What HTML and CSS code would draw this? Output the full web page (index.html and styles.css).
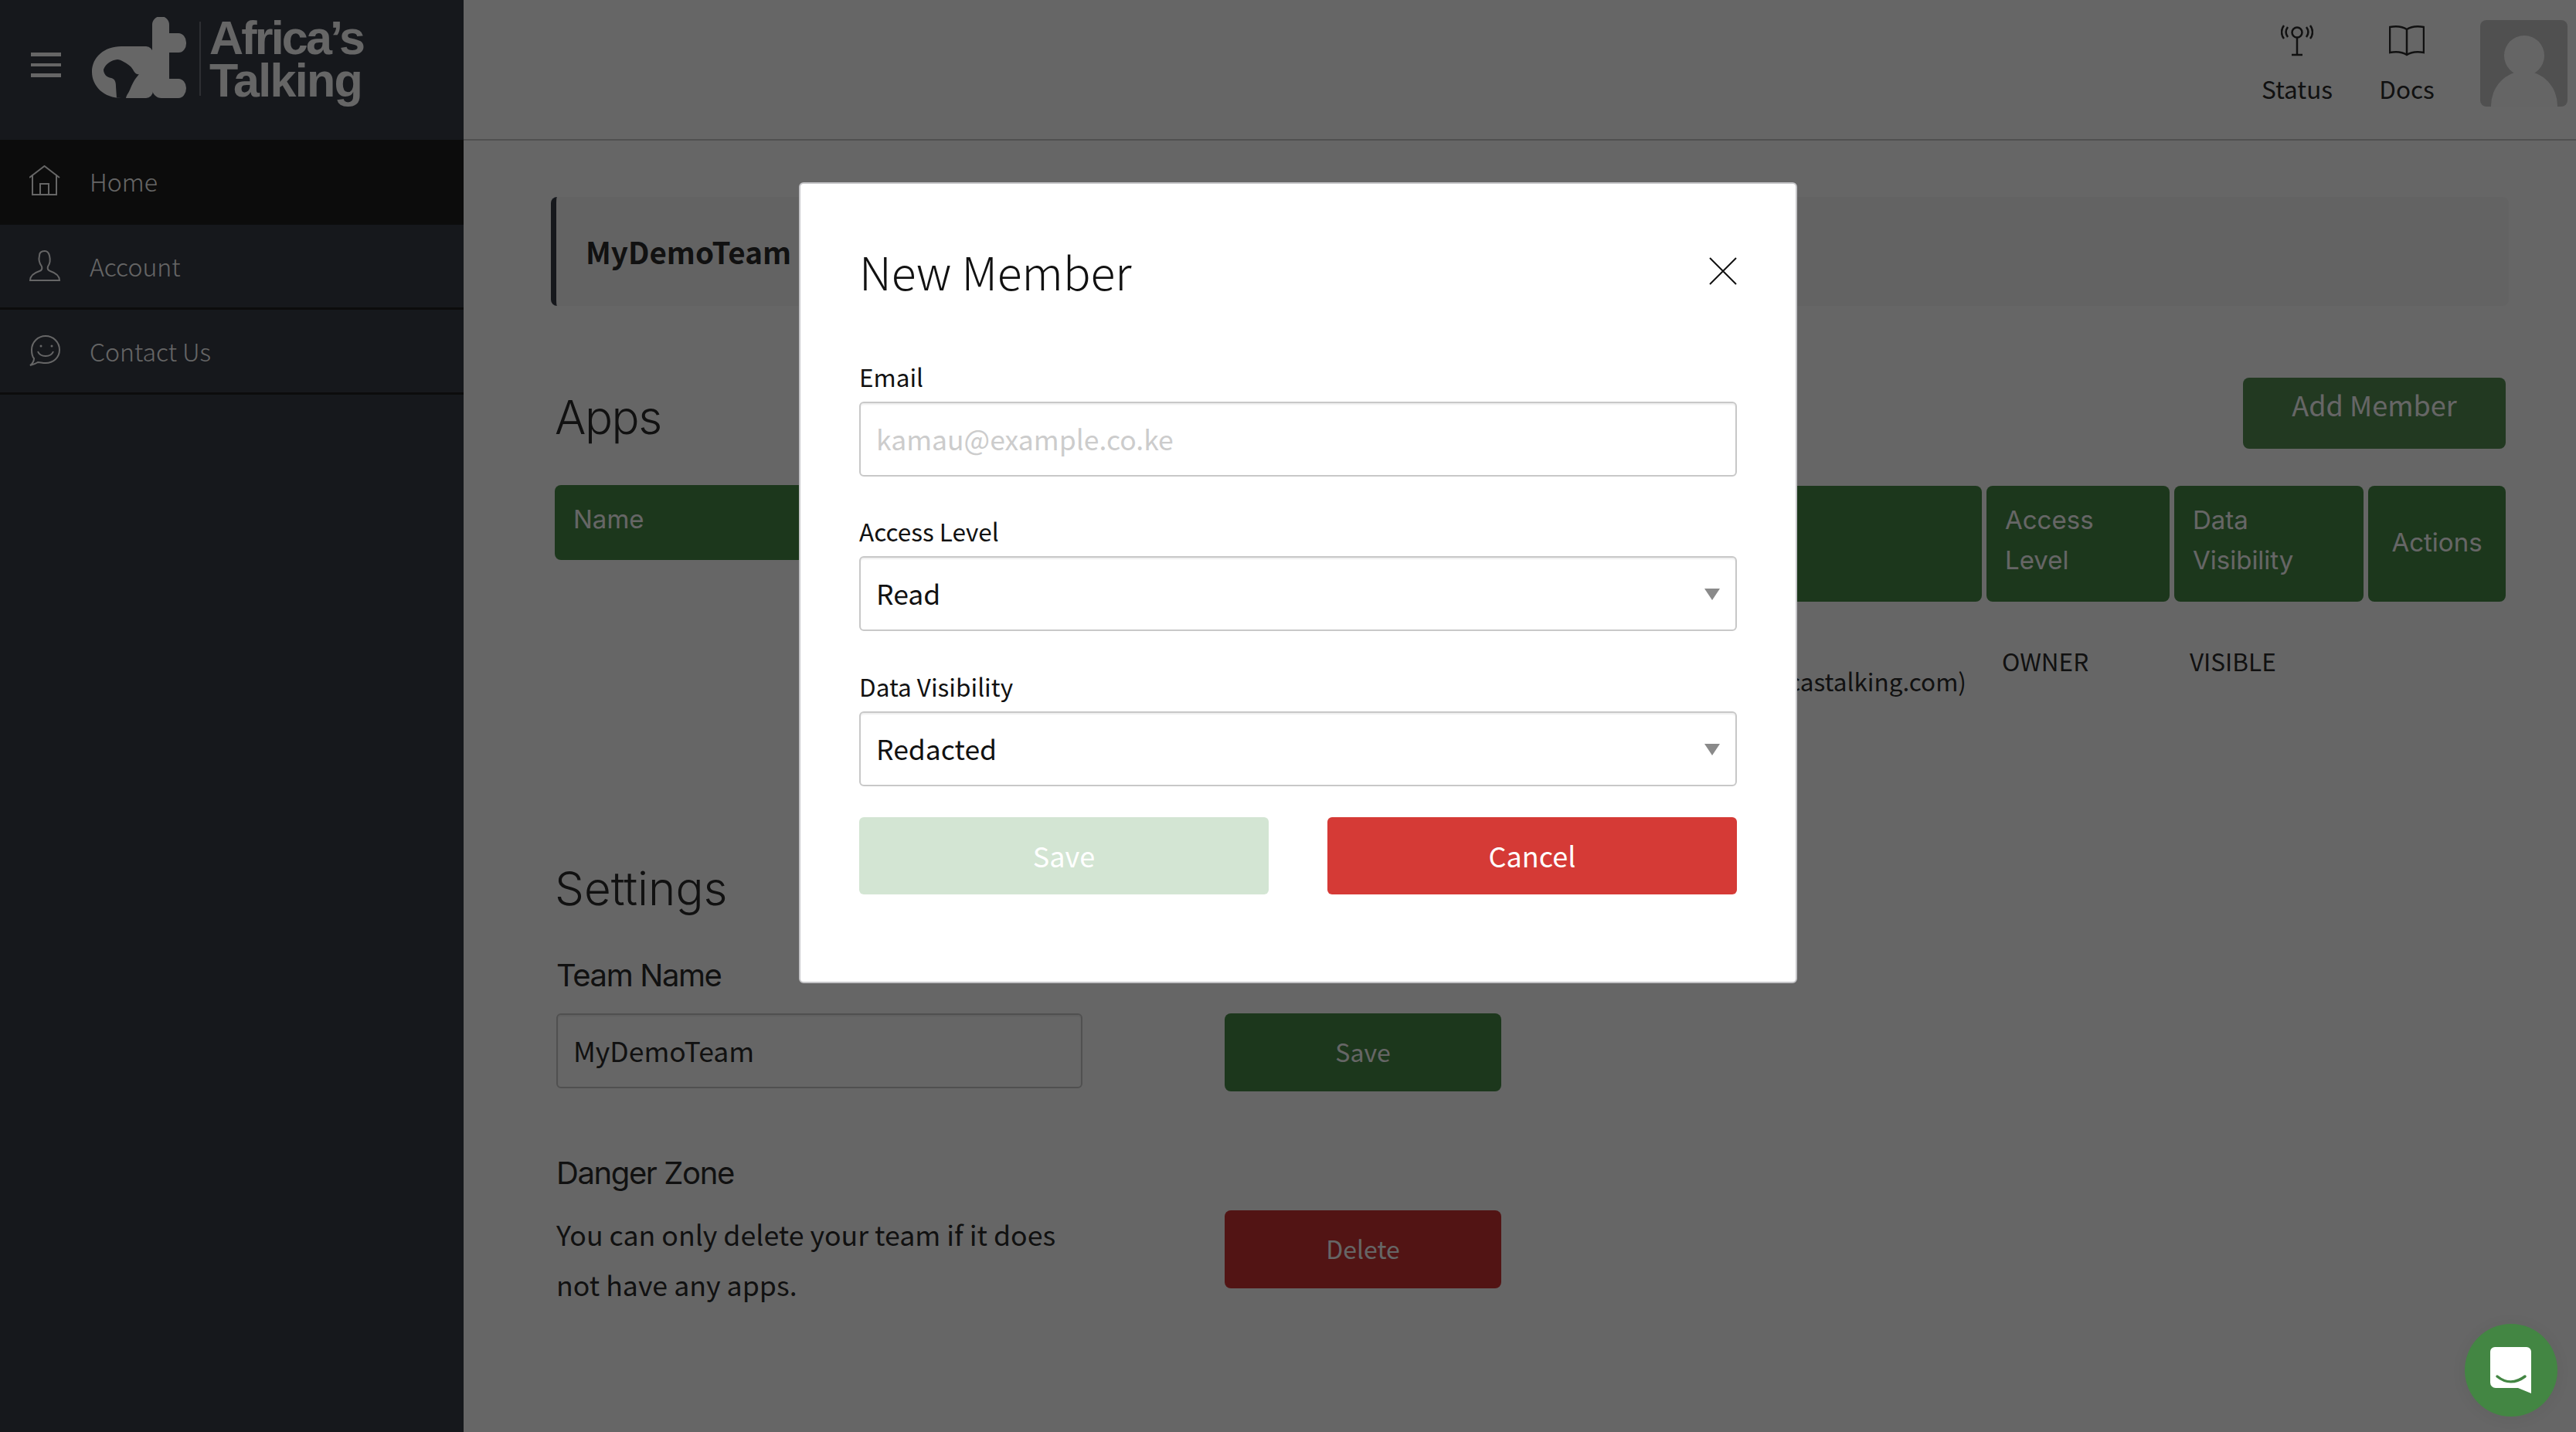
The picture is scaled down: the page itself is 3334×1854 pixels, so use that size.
FILE: index.html
```html
<!DOCTYPE html>
<html lang="en">
<head>
  <meta charset="UTF-8" />
  <title>Africa's Talking</title>
  <link rel="stylesheet" href="styles.css">
</head>
<body>
  <aside class="sidebar">
    <div class="brand">
      <div class="burger"><span></span><span></span><span></span></div>
      <svg class="brand-mark" width="124" height="108" viewBox="0 0 124 108">
        <path fill-rule="evenodd" d="M38 38H70a9 9 0 0 1 9 9V96a9 9 0 0 1-9 9H38C16 105 0 90 0 71S16 38 38 38ZM33 55C25 56 18 60 15 68 15 74 19 78 25 79 29 80 31 83 31 90L32 105H44C45 100 48 98 50 92 52 87 54 83 57 79L61 74C58 75 55 72 53 68 50 63 45 60 41 58 38 56 35 55 33 55Z"/>
        <path d="M78 10a10 10 0 0 1 22 0V21h12a10 12 0 0 1 10 12 10 12 0 0 1-10 13H100V80h12a10 12 0 0 1 10 12 10 13 0 0 1-10 13H90a12 12 0 0 1-12-12Z"/>
      </svg>
      <div class="brand-rule"></div>
      <div class="brand-name"><span>Africa’s</span><span class="brand-second">Talking</span></div>
    </div>
    <nav>
      <a class="nav-item active">
        <svg class="nav-icon" width="40" height="40" viewBox="0 0 40 40"><path d="M0 16 19.5 1 39 16M4 12V38H35V12M14 38V24H25V38"/></svg>
        Home
      </a>
      <a class="nav-item">
        <svg class="nav-icon" width="40" height="40" viewBox="0 0 40 40"><path d="M1 39H39C39 32 33 29 27 27 24 26 23 24 24 21 27 17 27 11 26 7 25 3 23 1 20 1 16 1 13 3 13 7 12 11 13 17 16 21 17 24 16 26 13 27 7 29 1 32 1 39Z"/></svg>
        Account
      </a>
      <a class="nav-item">
        <svg class="nav-icon" width="40" height="40" viewBox="0 0 40 40"><path d="M1 39C5 36 6 33 6 30 3 27 3 23 3 19 3 9 11 1 21 1S39 9 39 19 31 36 21 36C17 36 14 35 11 35 8 37 5 38 1 39Z"/><path d="M11 21C14 29 28 29 31 21"/><circle cx="15" cy="14" r="1.5"/><circle cx="29" cy="14" r="1.5"/></svg>
        Contact Us
      </a>
    </nav>
  </aside>

  <div class="main">
    <header class="topbar">
      <a class="top-link">
        <svg width="42" height="42" viewBox="0 0 42 42"><circle cx="21" cy="10" r="6.5"/><path d="M21 17V39M14 39H28M9 3C6 7 6 12 9 16M33 3C36 7 36 12 33 16M4 1C0 6 0 13 4 18M38 1C42 6 42 13 38 18"/></svg>
        <span>Status</span>
      </a>
      <a class="top-link">
        <svg width="46" height="42" viewBox="0 0 46 42"><path d="M23 6C17 2 7 2 1 3V36C7 35 17 35 23 39 29 35 39 35 45 36V3C39 2 29 2 23 6V39"/></svg>
        <span>Docs</span>
      </a>
      <div class="avatar"><div class="avatar-head"></div><div class="avatar-body"></div></div>
    </header>

    <div class="content">
      <div class="team-bar">MyDemoTeam</div>

      <div class="lists">
        <section class="apps">
          <h2 class="section-title">Apps</h2>
          <div class="th th-name">Name</div>
        </section>
        <section class="members">
          <div class="members-top">
            <button class="btn add-member">Add Member</button>
          </div>
          <div class="members-table">
            <div class="th">Member</div>
            <div class="th">Access Level</div>
            <div class="th">Data Visibility</div>
            <div class="th th-actions">Actions</div>
            <div class="td td-member"><div class="member-name">Owner</div><div>(owner@africastalking.com)</div></div>
            <div class="td">OWNER</div>
            <div class="td">VISIBLE</div>
            <div class="td"></div>
          </div>
        </section>
      </div>

      <section class="settings">
        <h2 class="section-title">Settings</h2>
        <div class="settings-grid">
          <div class="settings-left">
            <h3 class="sub-title">Team Name</h3>
            <input class="field team-field" type="text" value="MyDemoTeam">
          </div>
          <button class="btn settings-btn">Save</button>
        </div>
        <div class="settings-grid danger">
          <div class="settings-left">
            <h3 class="sub-title">Danger Zone</h3>
            <p class="danger-text">You can only delete your team if it does not have any apps.</p>
          </div>
          <button class="btn settings-btn btn-red">Delete</button>
        </div>
      </section>
    </div>
  </div>

  <div class="overlay">
    <div class="modal">
      <div class="modal-head">
        <h2 class="modal-title">New Member</h2>
        <svg class="close" width="36" height="36" viewBox="0 0 36 36"><path d="M1 1 35 35M35 1 1 35"/></svg>
      </div>
      <label class="label">Email</label>
      <input class="field" type="text" placeholder="kamau@example.co.ke">
      <label class="label">Access Level</label>
      <div class="select-wrap">
        <select class="field"><option>Read</option></select>
      </div>
      <label class="label">Data Visibility</label>
      <div class="select-wrap">
        <select class="field"><option>Redacted</option></select>
      </div>
      <div class="modal-actions">
        <button class="modal-btn save">Save</button>
        <button class="modal-btn cancel">Cancel</button>
      </div>
    </div>
  </div>

  <div class="chat">
    <svg width="54" height="60" viewBox="0 0 54 60">
      <path fill="#fff" d="M7 0H47a6 6 0 0 1 6 6V60L36 53H7a7 7 0 0 1-7-7V6a6 6 0 0 1 6-6Z"/>
      <path fill="none" stroke="#438643" stroke-width="3.5" stroke-linecap="round" d="M9 38C20 47 33 47 45 38"/>
    </svg>
  </div>
</body>
</html>
```

FILE: styles.css
```css
* {
  box-sizing: border-box;
}

html, body {
  height: 100%;
}

body {
  margin: 0;
  display: flex;
  overflow: hidden;
  background: #fff;
  color: #2b2b2b;
  font-family: "Noto Sans CJK SC", "Noto Sans", sans-serif;
  font-size: 31.5px;
}

/* sidebar */
.sidebar {
  width: 600px;
  flex: none;
  background: #373c48;
  color: #fff;
}

.brand {
  height: 181px;
  padding: 22px 0 0 40px;
  display: flex;
  align-items: flex-start;
}

.burger {
  width: 39px;
  margin: 46px 40px 0 0;
  display: flex;
  flex-direction: column;
  gap: 9px;
}

.burger span {
  height: 4.5px;
  background: #fff;
}

.brand-mark {
  fill: #fff;
  flex: none;
}

.brand-rule {
  width: 2px;
  height: 96px;
  margin: 6px 11px 0 15px;
  background: rgba(255, 255, 255, 0.3);
}

.brand-name {
  display: flex;
  flex-direction: column;
  font-family: "Liberation Sans", sans-serif;
  font-weight: 700;
  font-size: 61px;
  line-height: 55px;
  letter-spacing: -2.8px;
}

.brand-second {
  letter-spacing: -1.7px;
}

.nav-item {
  height: 110px;
  padding: 0 0 2px 38px;
  display: flex;
  align-items: center;
  gap: 38px;
  border-bottom: 3px solid #1e1e1e;
  font-size: 32px;
  font-weight: 300;
}

.nav-item.active {
  background: #1e1e1e;
}

.nav-icon {
  fill: none;
  stroke: #fff;
  stroke-width: 2;
}

.nav-icon circle {
  fill: #fff;
  stroke: none;
}

/* main column */
.main {
  flex: 1;
  min-width: 0;
}

.topbar {
  height: 182px;
  padding: 26px 11px 0 0;
  display: flex;
  justify-content: flex-end;
  align-items: flex-start;
  border-bottom: 2px solid #c8c8c8;
}

.top-link {
  width: 142px;
  padding-top: 6px;
  display: flex;
  flex-direction: column;
  align-items: center;
  gap: 17px;
  line-height: 46px;
}

.top-link svg {
  fill: none;
  stroke: #2b2b2b;
  stroke-width: 2.5;
}

.avatar {
  width: 113px;
  height: 112px;
  margin-left: 24px;
  position: relative;
  overflow: hidden;
  border-radius: 8px;
  background: #c8c8c8;
}

.avatar-head {
  width: 52px;
  height: 52px;
  margin: 20px auto 0;
  border-radius: 50%;
  background: #fdfdfd;
}

.avatar-body {
  width: 86px;
  height: 90px;
  margin: -6px auto 0;
  border-radius: 50% 50% 0 0;
  background: #fdfdfd;
}

.content {
  padding: 73px 91px 0 113px;
}

.team-bar {
  height: 141px;
  margin-right: -4px;
  padding: 0 0 2px 38px;
  display: flex;
  align-items: center;
  border-left: 7px solid #373c48;
  border-radius: 8px;
  background: #f7f7f7;
  font-size: 38.5px;
  font-weight: 700;
}

.lists {
  margin-left: 5px;
  display: flex;
  gap: 50px;
}

.apps {
  width: 1000px;
}

.members {
  flex: 1;
}

.section-title {
  margin: 0;
  font-family: Inter, sans-serif;
  font-weight: 300;
  font-size: 60px;
  line-height: 76px;
}

.apps .section-title {
  margin: 106px 0 0;
  letter-spacing: -1.5px;
}

.th-name {
  margin-top: 50px;
  height: 97px;
  padding-top: 20px;
}

.th {
  padding: 18px 24px;
  border-radius: 8px;
  background: #488a47;
  color: #fff;
  font-family: Inter, sans-serif;
  font-size: 33px;
  line-height: 52px;
}

.members-top {
  height: 233px;
  padding-top: 93px;
  display: flex;
  justify-content: flex-end;
  align-items: flex-start;
}

.add-member {
  width: 340px;
  height: 92px;
  padding-bottom: 26px;
  background: #558f53;
  font-size: 36px;
}

.members-table {
  display: grid;
  grid-template-columns: 1fr 237px 245px 178px;
  grid-template-rows: 150px auto;
  column-gap: 6px;
}

.th-actions {
  padding: 0 0 4px;
  display: flex;
  justify-content: center;
  align-items: center;
}

.td {
  padding: 50px 20px 0 20px;
  line-height: 52px;
}

.td-member {
  padding: 24px 20px 0 0;
  text-align: right;
}

.member-name {
  text-align: left;
}

.settings {
  margin-left: 5px;
  position: absolute;
  top: 1110px;
}

.settings .section-title {
  line-height: 80px;
}

.settings-grid {
  width: 1225px;
  margin-top: 48px;
  display: flex;
  justify-content: space-between;
  align-items: flex-end;
}

.settings-left {
  width: 681px;
  margin-left: 2px;
}

.sub-title {
  margin: 0 0 24px;
  font-family: Inter, sans-serif;
  font-weight: 400;
  font-size: 40px;
  line-height: 50px;
  letter-spacing: -1.4px;
}

.danger {
  margin-top: 81px;
  align-items: flex-start;
}

.danger .settings-btn {
  margin-top: 73px;
}

.danger-text {
  margin: -3px 0 0;
  font-size: 35.7px;
  line-height: 65px;
}

.btn {
  border: none;
  border-radius: 8px;
  color: #fff;
  font-family: "Noto Sans CJK SC", sans-serif;
}

.settings-btn {
  width: 358px;
  height: 101px;
  padding-bottom: 4px;
  background: #488a47;
  font-size: 32px;
}

.btn-red {
  background: #cd3232;
}

.field {
  width: 100%;
  height: 97px;
  padding: 0 20px 2px;
  border: 2px solid #c8c8c8;
  border-radius: 6px;
  background: #fff;
  box-shadow: inset 0 2px 2px rgba(0, 0, 0, 0.07);
  color: #111;
  font-family: "Noto Sans CJK SC", sans-serif;
  font-size: 35.5px;
  appearance: none;
}

.field::placeholder {
  color: #ccc;
}

.team-field {
  display: block;
  margin-bottom: 4px;
  color: #2b2b2b;
}

/* modal */
.overlay {
  position: fixed;
  inset: 0;
  padding: 236px 0 0 26px;
  display: flex;
  justify-content: center;
  align-items: flex-start;
  background: rgba(0, 0, 0, 0.6);
}

.modal {
  width: 1292px;
  height: 1037px;
  padding: 0 76px;
  border: 2px solid #c5c5c8;
  border-radius: 6px;
  background: #fff;
  color: #111;
}

.modal-head {
  height: 231px;
  padding-top: 73px;
  display: flex;
  justify-content: space-between;
  align-items: flex-start;
}

.modal-title {
  margin: 0;
  font-weight: 300;
  font-size: 59px;
  line-height: 80px;
}

.close {
  margin-top: 22px;
  stroke: #111;
  stroke-width: 2;
}

.label {
  display: block;
  height: 51px;
  line-height: 36px;
}

.field + .label {
  margin-top: 52px;
}

.select-wrap {
  position: relative;
}

.select-wrap + .label {
  margin-top: 53px;
}

.select-wrap::after {
  content: "";
  position: absolute;
  top: 42px;
  right: 22px;
  border-top: 15px solid #8a8a8a;
  border-left: 10px solid transparent;
  border-right: 10px solid transparent;
}

.modal-actions {
  margin-top: 40px;
  display: flex;
  justify-content: space-between;
}

.modal-btn {
  width: 530px;
  height: 100px;
  padding-bottom: 4px;
  border: none;
  border-radius: 6px;
  color: #fff;
  font-family: "Noto Sans CJK SC", sans-serif;
  font-size: 36px;
}

.save {
  background: #d3e5d3;
}

.cancel {
  background: #d53a36;
}

.chat {
  position: fixed;
  right: 24px;
  bottom: 20px;
  width: 120px;
  height: 120px;
  display: flex;
  justify-content: center;
  align-items: center;
  border-radius: 50%;
  background: #438643;
  box-shadow: 0 2px 20px rgba(0, 0, 0, 0.06);
}
```
